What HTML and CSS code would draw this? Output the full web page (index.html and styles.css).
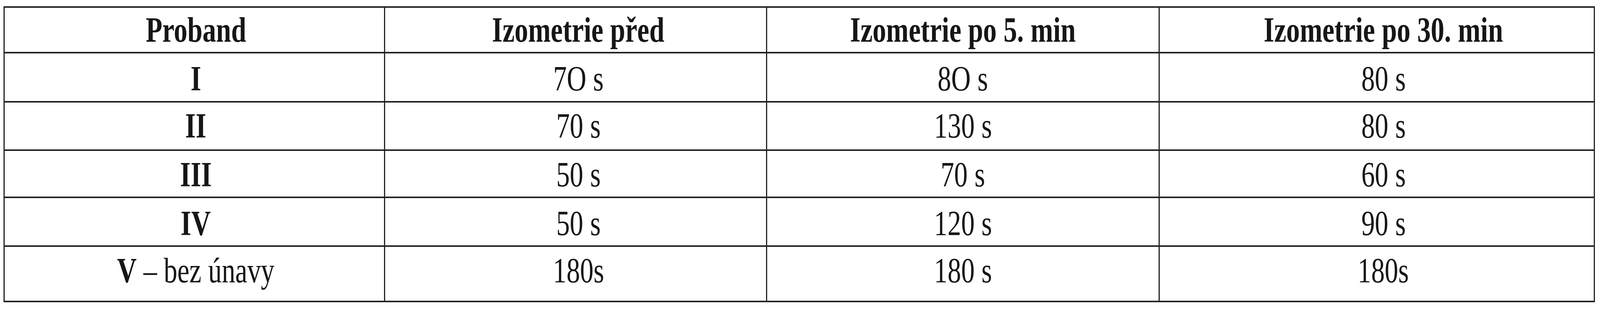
FILE: index.html
```html
<!DOCTYPE html>
<html lang="cs">
<head>
<meta charset="utf-8">
<title>Izometrie</title>
<link rel="stylesheet" href="styles.css">
</head>
<body>
<table class="results">
  <thead>
    <tr class="row-head">
      <th class="c1"><span class="txt">Proband</span></th>
      <th class="c2"><span class="txt">Izometrie před</span></th>
      <th class="c3"><span class="txt">Izometrie po 5. min</span></th>
      <th class="c4"><span class="txt">Izometrie po 30. min</span></th>
    </tr>
  </thead>
  <tbody>
    <tr class="row-1">
      <th class="c1"><span class="txt">I</span></th>
      <td class="c2"><span class="txt">7O s</span></td>
      <td class="c3"><span class="txt">8O s</span></td>
      <td class="c4"><span class="txt">80 s</span></td>
    </tr>
    <tr class="row-2">
      <th class="c1"><span class="txt">II</span></th>
      <td class="c2"><span class="txt">70 s</span></td>
      <td class="c3"><span class="txt">130 s</span></td>
      <td class="c4"><span class="txt">80 s</span></td>
    </tr>
    <tr class="row-3">
      <th class="c1"><span class="txt">III</span></th>
      <td class="c2"><span class="txt">50 s</span></td>
      <td class="c3"><span class="txt">70 s</span></td>
      <td class="c4"><span class="txt">60 s</span></td>
    </tr>
    <tr class="row-4">
      <th class="c1"><span class="txt">IV</span></th>
      <td class="c2"><span class="txt">50 s</span></td>
      <td class="c3"><span class="txt">120 s</span></td>
      <td class="c4"><span class="txt">90 s</span></td>
    </tr>
    <tr class="row-5">
      <td class="c1"><span class="txt"><strong>V</strong> – bez únavy</span></td>
      <td class="c2"><span class="txt">180s</span></td>
      <td class="c3"><span class="txt">180 s</span></td>
      <td class="c4"><span class="txt">180s</span></td>
    </tr>
  </tbody>
</table>
</body>
</html>
```

FILE: styles.css
```css
html, body {
  margin: 0;
  padding: 0;
  background: #ffffff;
}

body {
  font-family: "Liberation Serif", "Times New Roman", serif;
  color: #161616;
}

.results {
  margin: 16px 0 0 0.226vw;
  width: 99.454vw;
  table-layout: fixed;
  border-collapse: separate;
  border-spacing: 0;
  border-top: 4px solid #242224;
  border-left: 0.0755vw solid #242224;
}

.results th,
.results td {
  box-sizing: border-box;
  border-right: 0.0755vw solid #242224;
  border-bottom: 4px solid #242224;
  padding: 10px 0 0 0;
  font-size: 90px;
  line-height: 103px;
  text-align: center;
  vertical-align: top;
  white-space: nowrap;
}

.results th {
  font-weight: bold;
}

.results td {
  font-weight: normal;
}

.txt {
  display: inline-block;
  transform-origin: center top;
  transform: scaleX(calc(100vw / 5313px));
}

.results .c1 { width: 23.921%; padding-left: 0.188vw; }
.results .c2 { width: 24.035%; padding-left: 0.339vw; }
.results .c3 { width: 24.678%; }
.results .c4 { width: 27.366%; padding-left: 0.828vw; }

.row-head { height: 117px; }
.row-head th { padding-top: 5px; }
.row-1 { height: 126px; }
.row-1 th, .row-1 td { padding-top: 13px; }
.row-2 { height: 124px; }
.row-2 th, .row-2 td { padding-top: 8px; }
.row-3 { height: 121px; }
.row-3 th, .row-3 td { padding-top: 9px; }
.row-4 { height: 125px; }
.row-4 th, .row-4 td { padding-top: 13px; }
.row-5 { height: 142px; }
.row-5 td { padding-top: 9px; }
```
